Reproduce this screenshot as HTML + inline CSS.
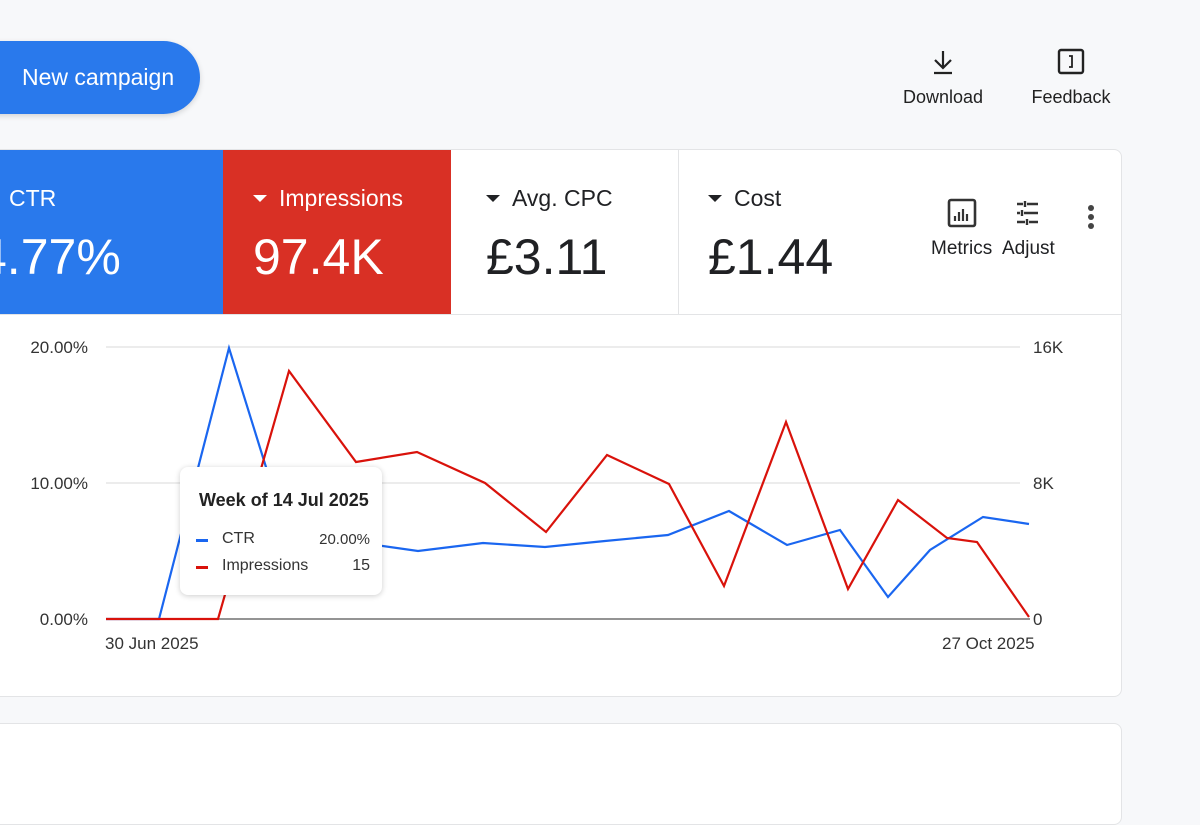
<!DOCTYPE html>
<html><head><style>
body{margin:0;width:1200px;height:800px;background:#f7f8fa;font-family:"Liberation Sans",Arial,sans-serif;position:relative;overflow:hidden;color:#202124}
.btn{position:absolute;left:-40px;top:41px;width:240px;height:73px;background:#2979ec;border-radius:37px;box-shadow:0 2px 6px rgba(0,0,0,.15)}
.btn span{position:absolute;left:62px;top:23px;color:#fff;font-size:23px}
.tool{position:absolute;top:48px;text-align:center;font-size:18px;color:#222}
.card{position:absolute;left:-10px;top:149px;width:1130px;height:546px;background:#fff;border:1px solid #e3e4e6;border-radius:8px;overflow:hidden}
.card2{position:absolute;left:-10px;top:723px;width:1130px;height:100px;background:#fff;border:1px solid #e3e4e6;border-radius:8px}
.tile{position:absolute;top:0;height:164px;border-bottom:1px solid #e3e4e6}
.lab{position:absolute;top:35px;font-size:23px}
.val{position:absolute;top:78px;font-size:50px}
.tri{display:inline-block;width:0;height:0;border-left:7px solid transparent;border-right:7px solid transparent;border-top:7px solid currentColor;margin-right:12px;vertical-align:4px}
.ax{position:absolute;font-size:17px;color:#333}
.yl{position:absolute;left:0;width:88px;text-align:right;font-size:17px;color:#333}
.tip{position:absolute;left:180px;top:467px;width:202px;height:128px;background:#fff;border-radius:8px;box-shadow:0 1px 6px rgba(0,0,0,.2)}
</style></head><body>
<div class="btn"><span>New campaign</span></div>
<div class="tool" style="left:900px;width:86px">
<svg width="26" height="28" viewBox="0 0 26 28"><path d="M13 3v17M5 12l8 8 8-8M4 25h18" stroke="#222" stroke-width="2.2" fill="none"/></svg><div style="margin-top:6px">Download</div></div>
<div class="tool" style="left:1030px;width:82px">
<svg width="28" height="28" viewBox="0 0 28 28"><rect x="2" y="2" width="24" height="23" rx="2" stroke="#222" stroke-width="2.4" fill="none"/><path d="M12 8h3v11h-3" stroke="#222" stroke-width="1.8" fill="none"/></svg><div style="margin-top:6px">Feedback</div></div>

<div class="card">
<div class="tile" style="left:0;width:232px;background:#2979ec;color:#fff"><div class="lab" style="left:18px">CTR</div><div class="val" style="left:-12px">4.77%</div></div>
<div class="tile" style="left:232px;width:228px;background:#d93025;color:#fff"><div class="lab" style="left:30px"><span class="tri"></span>Impressions</div><div class="val" style="left:30px">97.4K</div></div>
<div class="tile" style="left:460px;width:227px;border-right:1px solid #e3e4e6"><div class="lab" style="left:35px"><span class="tri"></span>Avg. CPC</div><div class="val" style="left:35px">£3.11</div></div>
<div class="tile" style="left:688px;width:442px"><div class="lab" style="left:29px"><span class="tri"></span>Cost</div><div class="val" style="left:29px">£1.44</div>
<div style="position:absolute;left:252px;top:48px;text-align:center;font-size:19px">
<svg width="30" height="30" viewBox="0 0 30 30"><rect x="2" y="2" width="26" height="26" rx="2" stroke="#333" stroke-width="2.6" fill="none"/><path d="M8 23v-5M12 23v-9M16 23v-12M20 23v-7" stroke="#333" stroke-width="2.2"/></svg><div style="margin-top:4px">Metrics</div></div>
<div style="position:absolute;left:323px;top:48px;text-align:center;font-size:19px">
<svg width="30" height="30" viewBox="0 0 30 30"><path d="M4 6h6M14 6h11M4 15h3M11 15h14M4 24h8M16 24h9M12 3v6M9 12v6M14 21v6" stroke="#333" stroke-width="2.4"/></svg><div style="margin-top:4px">Adjust</div></div>
<svg style="position:absolute;left:408px;top:54px" width="8" height="26"><circle cx="4" cy="4" r="3" fill="#444"/><circle cx="4" cy="13" r="3" fill="#444"/><circle cx="4" cy="22" r="3" fill="#444"/></svg>
</div>
</div>
<div class="card2"></div>

<svg style="position:absolute;left:0;top:0" width="1200" height="800">
<path d="M106 347H1020M106 483H1020" stroke="#e6e6e6" stroke-width="1.5"/>
<path d="M106 619H1030" stroke="#555" stroke-width="1.2"/>
<polyline fill="none" stroke="#1a66f0" stroke-width="2.2" points="106,619 159,619 229,348 270,480 340,540 418,551 483,543 545,547 605,541 668,535 729,511 787,545 840,530 888,597 930,550 983,517 1029,524"/>
<polyline fill="none" stroke="#d9120b" stroke-width="2.2" points="106,619 218,619 289,371 356,462 417,452 485,483 546,532 607,455 669,484 724,586 786,422 848,589 898,500 947,538 977,542 1029,617"/>
</svg>
<div class="yl" style="top:338px">20.00%</div>
<div class="yl" style="top:474px">10.00%</div>
<div class="yl" style="top:610px">0.00%</div>
<div class="ax" style="left:1033px;top:338px">16K</div>
<div class="ax" style="left:1033px;top:474px">8K</div>
<div class="ax" style="left:1033px;top:610px">0</div>
<div class="ax" style="left:105px;top:634px">30 Jun 2025</div>
<div class="ax" style="left:942px;top:634px">27 Oct 2025</div>
<div class="tip">
<div style="position:absolute;left:19px;top:23px;font-size:18px;font-weight:bold;color:#222">Week of 14 Jul 2025</div>
<div style="position:absolute;left:16px;top:72px;width:12px;height:2.5px;background:#1a66f0"></div>
<div style="position:absolute;left:42px;top:63px;font-size:16px;color:#333">CTR</div>
<div style="position:absolute;right:12px;top:64px;font-size:15px;color:#333">20.00%</div>
<div style="position:absolute;left:16px;top:99px;width:12px;height:2.5px;background:#d9120b"></div>
<div style="position:absolute;left:42px;top:90px;font-size:16px;color:#333">Impressions</div>
<div style="position:absolute;right:12px;top:90px;font-size:16px;color:#333">15</div>
</div>
</body></html>
